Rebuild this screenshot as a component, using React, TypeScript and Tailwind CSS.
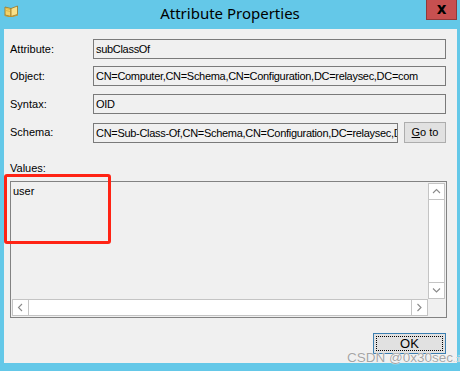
import React from "react";

const ui = { fontFamily: '"Liberation Sans", Arial, sans-serif' };

function BookIcon() {
  return (
    <svg width="15" height="12" viewBox="0 0 15 12">
      <path d="M1 2 L7 3.5 L7 11.5 L1 10 Z" fill="#f3d36a" stroke="#9a7420" strokeWidth="0.8" />
      <path d="M7 3.5 L13.5 1 L13.5 9.5 L7 11.5 Z" fill="#f8e08a" stroke="#9a7420" strokeWidth="0.8" />
      <path d="M2 3.5 L6 4.5 M2 5.5 L6 6.5" stroke="#d7ab3a" strokeWidth="0.7" />
      <path d="M0.5 10.5 L7 12 L14 10" stroke="#c7962a" strokeWidth="1" fill="none" />
    </svg>
  );
}

function Chevron({ dir }: { dir: "up" | "down" | "left" | "right" }) {
  const d =
    dir === "up"
      ? "M1 5 L4.5 1.5 L8 5"
      : dir === "down"
      ? "M1 1.5 L4.5 5 L8 1.5"
      : dir === "left"
      ? "M5 1 L1.5 4.5 L5 8"
      : "M1.5 1 L5 4.5 L1.5 8";
  const w = dir === "up" || dir === "down" ? 9 : 7;
  const h = dir === "up" || dir === "down" ? 7 : 9;
  return (
    <svg width={w} height={h} viewBox={`0 0 ${w} ${h}`}>
      <path d={d} fill="none" stroke="#8a8a8a" strokeWidth="1.1" />
    </svg>
  );
}

function Row({ label, children, mt }: { label: string; children: React.ReactNode; mt: string }) {
  return (
    <div className={`flex items-center ${mt}`}>
      <div className="w-[83px] text-[11px] leading-[13px] text-black">{label}</div>
      {children}
    </div>
  );
}

function Field({ value, w }: { value: string; w: string }) {
  return (
    <div
      className={`${w} h-[20px] border border-[#7a7a7a] bg-[#f0f0f0] px-[2px] text-[11px] leading-[18px] tracking-[-0.3px] text-black whitespace-nowrap overflow-hidden`}
    >
      {value}
    </div>
  );
}

export default function App() {
  return (
    <div className="relative w-[460px] h-[371px] bg-[#64c8e8] flex flex-col overflow-hidden" style={ui}>
      {/* Title bar */}
      <div className="relative h-[29px] flex items-start">
        <div className="absolute left-[4px] top-[5px]">
          <BookIcon />
        </div>
        <div
          className="w-full text-center text-[15px] leading-[20px] pt-[3px] text-black"
          style={{ fontFamily: '"Noto Sans", "Open Sans", sans-serif' }}
        >
          Attribute Properties
        </div>
        <div className="absolute left-[426px] top-0 w-[31px] h-[20px] bg-[#c75050] border border-[#8f3a3a] border-t-0 flex items-center justify-center">
          <span className="text-[15px] font-bold leading-none text-black" style={{ fontFamily: '"DejaVu Sans", sans-serif' }}>
            x
          </span>
        </div>
      </div>

      {/* Client area */}
      <div className="relative ml-[4px] mr-[3px] h-[334px] bg-[#f0f0f0] pl-[6px] pr-[11px] pt-[10px] flex flex-col">
        <Row label="Attribute:" mt="mt-0">
          <Field w="w-[353px]" value="subClassOf" />
        </Row>
        <Row label="Object:" mt="mt-[7px]">
          <Field w="w-[353px]" value="CN=Computer,CN=Schema,CN=Configuration,DC=relaysec,DC=com" />
        </Row>
        <Row label="Syntax:" mt="mt-[8px]">
          <Field w="w-[353px]" value="OID" />
        </Row>
        <Row label="Schema:" mt="mt-[8px]">
          <Field w="w-[305px]" value="CN=Sub-Class-Of,CN=Schema,CN=Configuration,DC=relaysec,DC=com" />
          <button className="ml-[6px] w-[42px] h-[21px] bg-[#e1e1e1] border border-[#adadad] text-[11px] leading-[19px] text-black p-0">
            <span className="underline">G</span>o to
          </button>
        </Row>

        <div className="mt-[19px] text-[11px] leading-[13px] text-black">Values:</div>

        <div className="mt-[6px] w-[437px] h-[137px] border border-[#828282] p-[1px]">
          <div className="grid grid-cols-[1fr_17px] grid-rows-[1fr_17px] w-full h-full">
            <div className="px-[1px] pt-[2px] text-[11px] leading-[13px] text-black">user</div>
            <div className="flex flex-col border border-[#c4c4c4] bg-white">
              <div className="h-[16px] border-b border-[#c4c4c4] flex items-center justify-center">
                <Chevron dir="up" />
              </div>
              <div className="flex-1" />
              <div className="h-[16px] border-t border-[#c4c4c4] flex items-center justify-center">
                <Chevron dir="down" />
              </div>
            </div>
            <div className="flex border border-[#c4c4c4] bg-white">
              <div className="w-[16px] border-r border-[#c4c4c4] flex items-center justify-center">
                <Chevron dir="left" />
              </div>
              <div className="flex-1" />
              <div className="w-[16px] border-l border-[#c4c4c4] flex items-center justify-center">
                <Chevron dir="right" />
              </div>
            </div>
            <div className="bg-[#f0f0f0]" />
          </div>
        </div>

        <div className="mt-[15px] flex justify-end">
          <button className="w-[73px] h-[21px] bg-[#e1e1e1] border border-[#3c7fb1] p-[2px]">
            <div className="w-full h-full border border-dotted border-black flex items-center justify-center text-[13px] leading-none text-black">
              OK
            </div>
          </button>
        </div>

        {/* annotation */}
        <div className="absolute left-0 top-[145px] w-[107px] h-[70px] border-[3px] border-[#ff2314] rounded-[3px]" />
      </div>

      {/* watermark */}
      <div
        className="absolute left-[347px] top-[350px] text-[13.5px] leading-[15px] text-[#a5a5a5] whitespace-nowrap"
        style={{ textShadow: "0 0 1px #fff, 0 0 1px #fff" }}
      >
        CSDN @0x30sec<span className="text-[#c8c8c8] text-[9px]">.:i</span>
      </div>
    </div>
  );
}
